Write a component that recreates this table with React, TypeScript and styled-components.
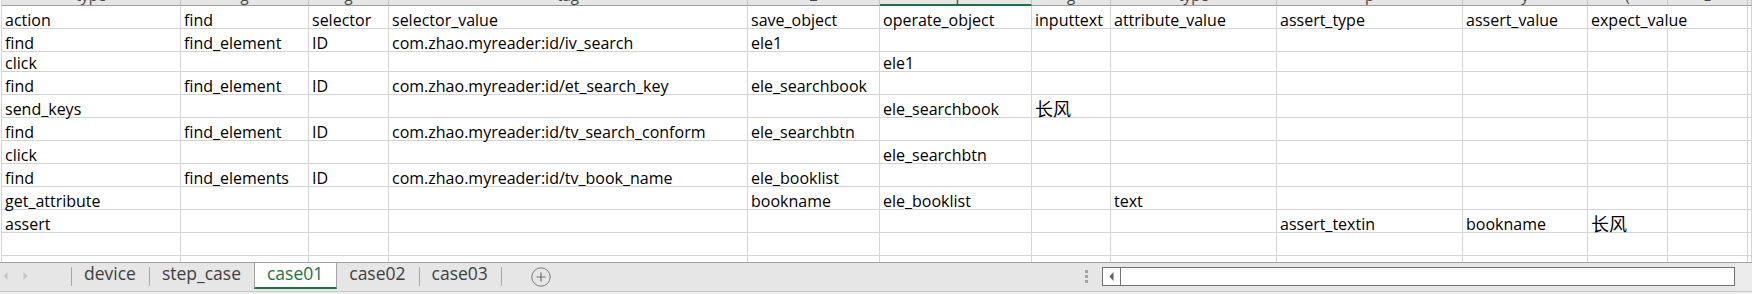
import React from "react";
import styled, { createGlobalStyle } from "styled-components";

const GRID_LINE = "#d4d4d4";
const EXCEL_GREEN = "#217346";
const FONT = `"Open Sans", "Noto Sans CJK SC", sans-serif`;
const COLUMNS =
  "179px 128px 80px 359px 132px 152px 79px 166px 186px 125px 80px 80px 1fr";

const GlobalStyle = createGlobalStyle`
  html, body {
    margin: 0;
    padding: 0;
    background: #ffffff;
    overflow: hidden;
  }
  #root {
    width: 1752px;
    height: 294px;
  }
`;

const Window = styled.div`
  width: 1752px;
  height: 294px;
  display: flex;
  flex-direction: column;
  font-family: ${FONT};
  background: #ffffff;
  overflow: hidden;
`;

/* ---------- worksheet grid ---------- */

const Sheet = styled.div`
  height: 262px;
  margin-left: 1px;
  border-left: 1px solid ${GRID_LINE};
  overflow: hidden;
  display: flex;
  flex-direction: column;
`;

const HeaderStrip = styled.div`
  display: grid;
  grid-template-columns: ${COLUMNS};
  height: 6px;
  flex: none;
  background: #e6e6e6;
`;

const HeaderCell = styled.div<{ $selected?: boolean }>`
  box-sizing: border-box;
  height: 6px;
  border-right: 1px solid #c4c4c4;
  border-bottom: ${(p) => (p.$selected ? `2px solid ${EXCEL_GREEN}` : "1px solid #9e9e9e")};
  overflow: hidden;
  display: flex;
  justify-content: center;
  align-items: flex-end;
  font-size: 15px;
  color: #444444;
`;

const HeaderLabel = styled.span`
  line-height: 15px;
  margin-bottom: 2px;
  white-space: nowrap;
`;

const Row = styled.div<{ $h: number }>`
  display: grid;
  grid-template-columns: ${COLUMNS};
  height: ${(p) => p.$h}px;
  flex: none;
`;

const Cell = styled.div<{ $span?: number }>`
  box-sizing: border-box;
  grid-column: ${(p) => (p.$span ? `span ${p.$span}` : "auto")};
  border-right: 1px solid ${GRID_LINE};
  border-bottom: 1px solid ${GRID_LINE};
  padding-left: 3px;
  display: flex;
  align-items: flex-end;
  font-size: 16px;
  line-height: 16px;
  color: #000000;
  white-space: nowrap;
  min-width: 0;
`;

/* Chinese values render a little larger than the Latin ones */
const CjkText = styled.span`
  font-size: 18px;
  line-height: 16px;
`;

/* ---------- sheet tab bar ---------- */

const TabBar = styled.div`
  flex: none;
  height: 28px;
  border-top: 1px solid #a3a3a3;
  background: #e6e6e6;
  display: flex;
  align-items: flex-start;
`;

const TabNav = styled.div`
  width: 71px;
  height: 26px;
  display: flex;
  align-items: center;
  gap: 15px;
  padding-left: 3px;
  box-sizing: border-box;
  flex: none;
`;

const TabDivider = styled.div`
  width: 1px;
  height: 19px;
  margin-top: 4px;
  background: #a6a6a6;
  flex: none;
`;

const Tab = styled.div<{ $active?: boolean }>`
  box-sizing: border-box;
  height: 26px;
  padding: 0 13px ${(p) => (p.$active ? 4 : 6)}px 12px;
  font-size: 17.5px;
  line-height: 20px;
  color: ${(p) => (p.$active ? EXCEL_GREEN : "#404040")};
  background: ${(p) => (p.$active ? "#ffffff" : "transparent")};
  border-left: ${(p) => (p.$active ? "1px solid #a3a3a3" : "none")};
  border-right: ${(p) => (p.$active ? "1px solid #a3a3a3" : "none")};
  border-bottom: ${(p) => (p.$active ? `2px solid ${EXCEL_GREEN}` : "none")};
  white-space: nowrap;
  flex: none;
`;

const AddSheet = styled.div`
  margin: 4px 0 0 29px;
  width: 20px;
  height: 20px;
  flex: none;
  display: flex;
`;

const Spacer = styled.div`
  flex: 1;
`;

const Grip = styled.div`
  width: 17px;
  margin-top: 7px;
  display: flex;
  flex-direction: column;
  gap: 2px;
  flex: none;
`;

const GripDot = styled.div`
  width: 3px;
  height: 3px;
  background: #a3a3a3;
`;

const HScroll = styled.div`
  box-sizing: border-box;
  width: 633px;
  height: 19px;
  margin-top: 4px;
  border: 1px solid #737373;
  background: #ffffff;
  display: flex;
  flex: none;
`;

const ScrollButton = styled.div`
  width: 17px;
  border-right: 1px solid #737373;
  display: flex;
  align-items: center;
  justify-content: center;
  flex: none;
`;

const ScrollThumb = styled.div`
  flex: 1;
  background: #ffffff;
`;

const Corner = styled.div`
  width: 16px;
  height: 28px;
  margin-left: 1px;
  background: #ececec;
  flex: none;
`;

const StatusEdge = styled.div`
  flex: none;
  height: 2px;
  border-top: 1px solid #c8c8c8;
  background: #eeeeee;
`;

/* ---------- data ---------- */

type CellValue = string | { text: string; span: number };

const headerLabels = [
  "type", "g", "g", "tag", "2", "op", "g", "type", "p", "y", "(", "z",
  "",
];

const rows: { h: number; cells: CellValue[] }[] = [
  {
    h: 23,
    cells: [
      "action", "find", "selector", "selector_value", "save_object",
      "operate_object", "inputtext", "attribute_value", "assert_type",
      "assert_value", { text: "expect_value", span: 2 },
    ],
  },
  {
    h: 23,
    cells: ["find", "find_element", "ID", "com.zhao.myreader:id/iv_search", "ele1"],
  },
  { h: 20, cells: ["click", "", "", "", "", "ele1"] },
  {
    h: 23,
    cells: [
      "find", "find_element", "ID", "com.zhao.myreader:id/et_search_key",
      "ele_searchbook",
    ],
  },
  { h: 23, cells: ["send_keys", "", "", "", "", "ele_searchbook", "长风"] },
  {
    h: 23,
    cells: [
      "find", "find_element", "ID", "com.zhao.myreader:id/tv_search_conform",
      "ele_searchbtn",
    ],
  },
  { h: 23, cells: ["click", "", "", "", "", "ele_searchbtn"] },
  {
    h: 23,
    cells: [
      "find", "find_elements", "ID", "com.zhao.myreader:id/tv_book_name",
      "ele_booklist",
    ],
  },
  {
    h: 23,
    cells: ["get_attribute", "", "", "", "bookname", "ele_booklist", "", "text"],
  },
  {
    h: 23,
    cells: ["assert", "", "", "", "", "", "", "", "assert_textin", "bookname", "长风"],
  },
  { h: 23, cells: [] },
  { h: 23, cells: [] },
];

const COLUMN_COUNT = 13;
const HAS_CJK = /[\u3400-\u9fff]/;

function expandRow(cells: CellValue[]) {
  const out: { text: string; span?: number }[] = [];
  let used = 0;
  for (const c of cells) {
    if (typeof c === "string") {
      out.push({ text: c });
      used += 1;
    } else {
      out.push({ text: c.text, span: c.span });
      used += c.span;
    }
  }
  while (used < COLUMN_COUNT) {
    out.push({ text: "" });
    used += 1;
  }
  return out;
}

const sheets = ["device", "step_case", "case01", "case02", "case03"];
const ACTIVE_SHEET = "case01";

function PlusCircle() {
  return (
    <svg width="20" height="20" viewBox="0 0 20 20">
      <circle cx="10" cy="10" r="9.2" fill="none" stroke="#7a7a7a" strokeWidth="1" />
      <path d="M10 5.5v9M5.5 10h9" stroke="#6e6e6e" strokeWidth="1.2" />
    </svg>
  );
}

function NavArrow({ dir }: { dir: "left" | "right" }) {
  return (
    <svg width="5" height="8" viewBox="0 0 5 8">
      <path
        d={dir === "left" ? "M4.5 0L0.5 4L4.5 8Z" : "M0.5 0L4.5 4L0.5 8Z"}
        fill="#c6c6c6"
      />
    </svg>
  );
}

export default function App() {
  return (
    <>
      <GlobalStyle />
      <Window>
        <Sheet>
          <HeaderStrip>
            {headerLabels.map((label, i) => (
              <HeaderCell key={i} $selected={i === 5}>
                <HeaderLabel>{label}</HeaderLabel>
              </HeaderCell>
            ))}
          </HeaderStrip>
          {rows.map((row, r) => (
            <Row key={r} $h={row.h}>
              {expandRow(row.cells).map((cell, c) => (
                <Cell key={c} $span={cell.span}>
                  {HAS_CJK.test(cell.text) ? <CjkText>{cell.text}</CjkText> : cell.text}
                </Cell>
              ))}
            </Row>
          ))}
        </Sheet>

        <TabBar>
          <TabNav>
            <NavArrow dir="left" />
            <NavArrow dir="right" />
          </TabNav>
          <TabDivider />
          {sheets.map((name, i) => {
            const active = name === ACTIVE_SHEET;
            const nextActive = sheets[i + 1] === ACTIVE_SHEET;
            return (
              <React.Fragment key={name}>
                <Tab $active={active}>{name}</Tab>
                {!active && !nextActive && <TabDivider />}
              </React.Fragment>
            );
          })}
          <AddSheet>
            <PlusCircle />
          </AddSheet>
          <Spacer />
          <Grip>
            <GripDot />
            <GripDot />
            <GripDot />
          </Grip>
          <HScroll>
            <ScrollButton>
              <svg width="5" height="9" viewBox="0 0 5 9">
                <path d="M4.5 0L0.5 4.5L4.5 9Z" fill="#5f5f5f" />
              </svg>
            </ScrollButton>
            <ScrollThumb />
          </HScroll>
          <Corner />
        </TabBar>
        <StatusEdge />
      </Window>
    </>
  );
}
